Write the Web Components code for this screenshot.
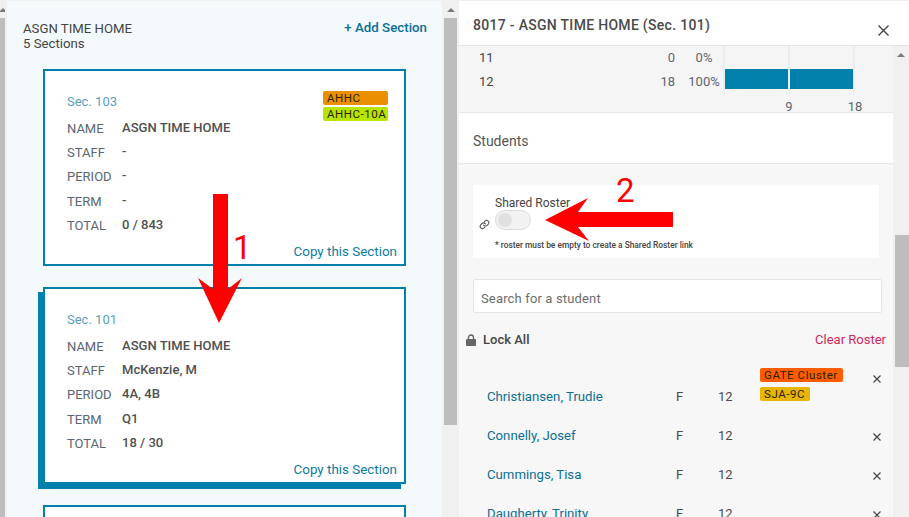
<!DOCTYPE html>
<html>
<head>
<meta charset="utf-8">
<title>Sections</title>
<style>
  html, body { margin: 0; height: 517px; overflow: hidden; background: #f0f0f0; }
  body { font: 13px Roboto, sans-serif; color: #4a4a4a; position: relative; }
</style>
</head>
<body>
<app-shell>
  <fake-scrollbar slot="outer" thumb-top="17" thumb-height="499" arrow style="width:5px"></fake-scrollbar>

  <sections-panel slot="left" title-text="ASGN TIME HOME" count="5 Sections">
    <section-card sec="Sec. 103" name="ASGN TIME HOME" staff="-" period="-" term="-" total="0 / 843">
      <tag-pill slot="tags" color="#ea9000" wide>AHHC</tag-pill>
      <tag-pill slot="tags" color="#b7e500" wide>AHHC-10A</tag-pill>
    </section-card>
    <section-card selected sec="Sec. 101" name="ASGN TIME HOME" staff="McKenzie, M" period="4A, 4B" term="Q1" total="18 / 30"></section-card>
    <section-card></section-card>
  </sections-panel>

  <fake-scrollbar slot="mid" thumb-top="17" thumb-height="407" arrow style="width:13px"></fake-scrollbar>

  <detail-panel slot="right" heading="8017 - ASGN TIME HOME (Sec. 101)">
    <grade-stats></grade-stats>
    <students-section>
      <student-row name="Christiansen, Trudie" first>
        <tag-pill slot="tags" color="#ff5c00">GATE Cluster</tag-pill>
        <tag-pill slot="tags" color="#e8b500">SJA-9C</tag-pill>
      </student-row>
      <student-row name="Connelly, Josef"></student-row>
      <student-row name="Cummings, Tisa"></student-row>
      <student-row name="Daugherty, Trinity"></student-row>
    </students-section>
    <fake-scrollbar slot="scroll" thumb-top="189" thumb-height="132" arrow inset style="width:16px;height:471px"></fake-scrollbar>
  </detail-panel>
</app-shell>

<!-- annotations drawn on top of the screenshot -->
<callout-arrow points="213,194 228,194 228,289 242,278 219,323 198,278 213,289" label="1" lx="233" ly="229"></callout-arrow>
<callout-arrow points="673,212 673,227 578,227 589,241 545,220 588,198 578,212" label="2" lx="616" ly="172"></callout-arrow>

<script>
// Page frame: columns side by side
class AppShell extends HTMLElement {
  constructor() {
    super();
    const shadow = this.attachShadow({ mode: "open" });
    shadow.innerHTML = `
      <style>
        :host { display: flex; height: 516px; margin-top: 1px; background: #f0f0f0; }
        .gap { width: 2px; flex: none; }
      </style>
      <slot name="outer"></slot>
      <div class="gap"></div>
      <slot name="left"></slot>
      <div class="gap"></div>
      <slot name="mid"></slot>
      <div class="gap"></div>
      <slot name="right"></slot>
    `;
  }
}
customElements.define("app-shell", AppShell);

// Looks like the browser's scrollbar, thumb position comes from attributes
class FakeScrollbar extends HTMLElement {
  constructor() {
    super();
    const shadow = this.attachShadow({ mode: "open" });
    shadow.innerHTML = `
      <style>
        :host { display: block; flex: none; position: relative; background: #f0f0f0; overflow: hidden; height: 516px; }
        :host([inset]) .thumb { margin-left: 2px; }
        .thumb { background: #bdbdbd; }
        .arrow { position: absolute; top: 7px; left: 50%; margin-left: -4px; width: 0; height: 0;
          border: 4px solid transparent; border-top: 0; border-bottom: 4px solid #7a7a7a; }
      </style>
      <div class="arrow" hidden></div>
      <div class="thumb"></div>
    `;
    shadow.querySelector(".arrow").hidden = !this.hasAttribute("arrow");
    const thumb = shadow.querySelector(".thumb");
    thumb.style.marginTop = this.getAttribute("thumb-top") + "px";
    thumb.style.height = this.getAttribute("thumb-height") + "px";
  }
}
customElements.define("fake-scrollbar", FakeScrollbar);

class TagPill extends HTMLElement {
  constructor() {
    super();
    const shadow = this.attachShadow({ mode: "open" });
    shadow.innerHTML = `
      <style>
        :host { display: block; width: fit-content; height: 14px; line-height: 14px; padding: 0 5px 0 4px;
          border-radius: 2px; font-size: 11.500px; letter-spacing: .55px; color: #2a2200; white-space: nowrap; }
        :host([wide]) { width: 56px; }
      </style>
      <slot></slot>
    `;
    this.style.background = this.getAttribute("color");
  }
}
customElements.define("tag-pill", TagPill);

const sectionsTemplate = document.createElement("template");
sectionsTemplate.innerHTML = `
  <style>
    :host { display: block; flex: none; width: 435px; height: 516px; overflow: hidden; background: #f4f9fc; box-sizing: border-box; padding: 20px 15px 0 16px; }
    header { display: flex; justify-content: space-between; align-items: flex-start; }
    h2 { margin: 0; font-size: 13.200px; font-weight: 400; line-height: 15px; color: #444; }
    a { color: #0b6f96; font-weight: 500; font-size: 13.300px; line-height: 15px; margin-top: -1px; }
    .list { display: flex; flex-direction: column; gap: 21px; padding: 18px 21px 0 20px; }
  </style>
  <header>
    <h2><span id="t"></span><br><span id="c"></span></h2>
    <a>+ Add Section</a>
  </header>
  <div class="list"><slot></slot></div>
`;
class SectionsPanel extends HTMLElement {
  constructor() {
    super();
    const shadow = this.attachShadow({ mode: "open" });
    shadow.append(sectionsTemplate.content.cloneNode(true));
    shadow.querySelector("#t").textContent = this.getAttribute("title-text");
    shadow.querySelector("#c").textContent = this.getAttribute("count");
  }
}
customElements.define("sections-panel", SectionsPanel);

const cardTemplate = document.createElement("template");
cardTemplate.innerHTML = `
  <style>
    :host { display: block; flex: none; height: 197px; box-sizing: border-box; border: 2px solid #0080aa; background: #fff; padding: 0 7px 0 22px; }
    :host([selected]) { box-shadow: -5px 5px 0 0 #0080aa; }
    .top { display: flex; justify-content: space-between; height: 44px; }
    .sec { color: #5b9fbd; font-size: 13px; padding-top: 23px; line-height: 16px; }
    .tags { display: flex; flex-direction: column; gap: 2px; padding-top: 20px; margin-right: 9px; }
    dl { margin: 0; display: grid; grid-template-columns: 55px 1fr; grid-auto-rows: 24.400px; align-items: center; }
    dt { color: #5a6672; font-size: 13px; padding-top: 2px; }
    dd { margin: 0; color: #505050; font-weight: 500; font-size: 13.050px; }
    .copy { text-align: right; color: #0b7ba3; font-size: 13.400px; line-height: 16px; margin-top: 7px; }
  </style>
  <div class="top">
    <div class="sec"></div>
    <div class="tags"><slot name="tags"></slot></div>
  </div>
  <dl>
    <dt>NAME</dt><dd data-f="name"></dd>
    <dt>STAFF</dt><dd data-f="staff"></dd>
    <dt>PERIOD</dt><dd data-f="period"></dd>
    <dt>TERM</dt><dd data-f="term"></dd>
    <dt>TOTAL</dt><dd data-f="total"></dd>
  </dl>
  <div class="copy">Copy this Section</div>
`;
class SectionCard extends HTMLElement {
  constructor() {
    super();
    const shadow = this.attachShadow({ mode: "open" });
    shadow.append(cardTemplate.content.cloneNode(true));
    shadow.querySelector(".sec").textContent = this.getAttribute("sec");
    shadow.querySelectorAll("[data-f]").forEach((el) => {
      el.textContent = this.getAttribute(el.dataset.f);
    });
    // the card peeking in at the bottom has no content yet
    if (!this.hasAttribute("sec")) {
      shadow.querySelector("dl").style.display = "none";
      shadow.querySelector(".copy").style.display = "none";
    }
  }
}
customElements.define("section-card", SectionCard);

const detailTemplate = document.createElement("template");
detailTemplate.innerHTML = `
  <style>
    :host { display: flex; flex-direction: column; flex: none; width: 450px; height: 516px; overflow: hidden; background: #f7f7f7; }
    header { flex: none; height: 45px; box-sizing: border-box; background: #fff; border-bottom: 1px solid #e6e6e6; display: flex; justify-content: space-between; padding: 16px 20px 0 14px; }
    h1 { margin: 0; font-size: 14px; font-weight: 500; line-height: 17px; color: #4a4a4a; letter-spacing: .3px; }
    svg { width: 11px; height: 11px; margin-top: 8px; }
    .body { display: flex; flex: 1; min-height: 0; }
    .content { flex: none; width: 434px; display: flex; flex-direction: column; overflow: hidden; }
  </style>
  <header>
    <h1></h1>
    <svg viewBox="0 0 11 11"><path d="M.5.5l10 10M10.500.5l-10 10" stroke="#444" stroke-width="1.400" fill="none"/></svg>
  </header>
  <div class="body">
    <div class="content"><slot></slot></div>
    <slot name="scroll"></slot>
  </div>
`;
class DetailPanel extends HTMLElement {
  constructor() {
    super();
    const shadow = this.attachShadow({ mode: "open" });
    shadow.append(detailTemplate.content.cloneNode(true));
    shadow.querySelector("h1").textContent = this.getAttribute("heading");
  }
}
customElements.define("detail-panel", DetailPanel);

// Grade breakdown rows with the little bar chart
class GradeStats extends HTMLElement {
  constructor() {
    super();
    const shadow = this.attachShadow({ mode: "open" });
    shadow.innerHTML = `
      <style>
        :host { display: block; flex: none; height: 67px; box-sizing: border-box; background: #f5f5f5; border-bottom: 1px solid #e8e8e8; font-size: 13px; overflow: hidden; }
        .row { display: grid; grid-template-columns: 20px 176px 10px 38px 132px; height: 23px; line-height: 24px; padding-left: 20px; }
        .row.bar { line-height: 26px; }
        .g { color: #444; }
        .n, .p { color: #5c6670; }
        .n { text-align: right; }
        .p { text-align: center; white-space: nowrap; }
        .plot { display: grid; grid-template-columns: 63px 63px; gap: 2px; height: 100%; border: 0 solid #ececec; border-width: 0 2px; background: #ececec; }
        .plot div { background: #f5f5f5; }
        .bar .plot div { background: linear-gradient(#0080aa 20px, #f5f5f5 20px); }
        .axis { height: 20px; line-height: 30px; color: #5c6670; padding-left: 297px; display: flex; }
        .axis span { width: 66px; text-align: center; }
      </style>
      <div class="row"><span class="g">11</span><span class="n">0</span><i></i><span class="p">0%</span>
        <div class="plot"><div></div><div></div></div></div>
      <div class="row bar"><span class="g">12</span><span class="n">18</span><i></i><span class="p">100%</span>
        <div class="plot"><div></div><div></div></div></div>
      <div class="axis"><span>9</span><span>18</span></div>
    `;
  }
}
customElements.define("grade-stats", GradeStats);

const studentsTemplate = document.createElement("template");
studentsTemplate.innerHTML = `
  <style>
    :host { display: block; flex: 1; }
    .title { height: 51px; box-sizing: border-box; background: #fff; border-bottom: 1px solid #e6e6e6; padding: 20px 0 0 14px; line-height: 17px; font-size: 14px; color: #555; }
    .body { padding: 21px 11px 0 14px; }
    .shared { height: 73px; width: 406px; box-sizing: border-box; background: #fff; padding: 11px 0 0 22px; font-size: 12px; }
    .shared b { display: block; font-weight: 400; line-height: 14px; color: #444; }
    .switch { display: block; width: 36px; height: 20px; box-sizing: border-box; border: 1px solid #dcdcdc; border-radius: 10px; background: #f2f2f2; position: relative; }
    .switch::after { content: ""; position: absolute; left: 2px; top: 2px; width: 14px; height: 14px; border-radius: 50%; background: #e0e0e0; }
    .toggle-row { position: relative; }
    .toggle-row svg { position: absolute; left: -16px; top: 9px; width: 11px; height: 11px; }
    small { display: block; margin-top: 10px; font-size: 8.400px; font-weight: 500; color: #444; line-height: 11px; }
    .search { margin-top: 21px; width: 409px; height: 34px; box-sizing: border-box; background: #fff; border: 1px solid #e4e4e4; border-radius: 2px; padding: 2px 0 0 7px; line-height: 33px; font-size: 13px; letter-spacing: .15px; color: #6d6d6d; }
    .bar { display: flex; align-items: center; justify-content: space-between; margin: 18px -4px 0 -7px; height: 17px; }
    .lock { display: flex; align-items: center; gap: 7px; font-weight: 500; font-size: 13px; color: #444; }
    .lock svg { width: 10px; height: 12px; }
    .clear { color: #d2275e; font-size: 13px; }
    .rows { margin-top: 10px; }
  </style>
  <div class="title">Students</div>
  <div class="body">
    <div class="shared">
      <b>Shared Roster</b>
      <div class="toggle-row">
        <span class="switch"></span>
        <svg viewBox="0 0 24 24" fill="none" stroke="#555" stroke-width="2.400" stroke-linecap="round"><path d="M10 13.500a5 5 0 0 0 7.500.5l3-3a5 5 0 0 0-7-7l-1.700 1.700"/><path d="M14 10.500a5 5 0 0 0-7.500-.5l-3 3a5 5 0 0 0 7 7l1.700-1.700"/></svg>
      </div>
      <small>* roster must be empty to create a Shared Roster link</small>
    </div>
    <div class="search">Search for a student</div>
    <div class="bar">
      <span class="lock"><svg viewBox="0 0 10 12"><path fill="#666" d="M1 5h8a1 1 0 0 1 1 1v5a1 1 0 0 1-1 1H1a1 1 0 0 1-1-1V6a1 1 0 0 1 1-1z"/><path fill="none" stroke="#666" stroke-width="1.400" d="M2.500 5.500V3.500a2.500 2.500 0 0 1 5 0v2"/></svg>Lock All</span>
      <span class="clear">Clear Roster</span>
    </div>
    <div class="rows"><slot></slot></div>
  </div>
`;
class StudentsSection extends HTMLElement {
  constructor() {
    super();
    const shadow = this.attachShadow({ mode: "open" });
    shadow.append(studentsTemplate.content.cloneNode(true));
  }
}
customElements.define("students-section", StudentsSection);

const rowTemplate = document.createElement("template");
rowTemplate.innerHTML = `
  <style>
    :host { display: grid; grid-template-columns: 189px 42px 42px 113px 11px; height: 39px; align-items: center; padding-left: 14px; font-size: 13px; }
    :host([first]) { height: 58px; }
    .name { color: #0b6f96; white-space: nowrap; font-size: 13.200px; }
    .v { color: #4a4a4a; }
    .tags { display: flex; flex-direction: column; gap: 5px; }
    :host([first]) .tags { margin-top: -5px; }
    :host([first]) .name, :host([first]) .v { margin-top: 18px; }
    svg { width: 8px; height: 8px; margin-top: 2px; }
    :host([first]) svg { margin-top: -17px; }
  </style>
  <span class="name"></span><span class="v">F</span><span class="v">12</span>
  <div class="tags"><slot name="tags"></slot></div>
  <svg viewBox="0 0 8 8"><path d="M.5.5l7 7M7.500.5l-7 7" stroke="#444" stroke-width="1.200" fill="none"/></svg>
`;
class StudentRow extends HTMLElement {
  constructor() {
    super();
    const shadow = this.attachShadow({ mode: "open" });
    shadow.append(rowTemplate.content.cloneNode(true));
    shadow.querySelector(".name").textContent = this.getAttribute("name");
  }
}
customElements.define("student-row", StudentRow);

// Red arrows and numbers, these sit over the page
class CalloutArrow extends HTMLElement {
  constructor() {
    super();
    const shadow = this.attachShadow({ mode: "open" });
    shadow.innerHTML = `
      <style>
        :host { position: absolute; left: 0; top: 0; width: 909px; height: 517px; pointer-events: none; display: block; }
        svg { position: absolute; left: 0; top: 0; }
        span { position: absolute; color: #f00; font: 33px/38px Roboto, sans-serif; }
      </style>
      <svg width="909" height="517"><polygon fill="#f00" points="${this.getAttribute("points")}"/></svg>
      <span style="left:${this.getAttribute("lx")}px;top:${this.getAttribute("ly")}px">${this.getAttribute("label")}</span>
    `;
  }
}
customElements.define("callout-arrow", CalloutArrow);
</script>
</body>
</html>
